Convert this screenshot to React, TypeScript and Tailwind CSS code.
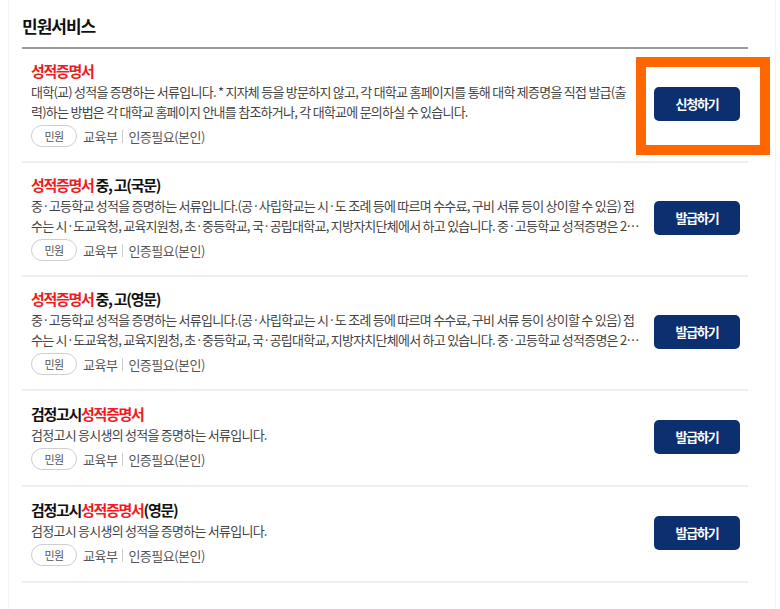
import React from "react";

type Service = {
  pre?: string;
  red: string;
  post?: string;
  desc: string;
  action: string;
};

const services: Service[] = [
  {
    red: "성적증명서",
    desc: "대학(교) 성적을 증명하는 서류입니다. * 지자체 등을 방문하지 않고, 각 대학교 홈페이지를 통해 대학 제증명을 직접 발급(출력)하는 방법은 각 대학교 홈페이지 안내를 참조하거나, 각 대학교에 문의하실 수 있습니다.",
    action: "신청하기",
  },
  {
    red: "성적증명서",
    post: " 중, 고(국문)",
    desc: "중·고등학교 성적을 증명하는 서류입니다.(공·사립학교는 시·도 조례 등에 따르며 수수료, 구비 서류 등이 상이할 수 있음) 접수는 시·도교육청, 교육지원청, 초·중등학교, 국·공립대학교, 지방자치단체에서 하고 있습니다. 중·고등학교 성적증명은 2000년 이후 졸업자에 한하여 발급 가능합니다.",
    action: "발급하기",
  },
  {
    red: "성적증명서",
    post: " 중, 고(영문)",
    desc: "중·고등학교 성적을 증명하는 서류입니다.(공·사립학교는 시·도 조례 등에 따르며 수수료, 구비 서류 등이 상이할 수 있음) 접수는 시·도교육청, 교육지원청, 초·중등학교, 국·공립대학교, 지방자치단체에서 하고 있습니다. 중·고등학교 성적증명은 2000년 이후 졸업자에 한하여 발급 가능합니다.",
    action: "발급하기",
  },
  {
    pre: "검정고시",
    red: "성적증명서",
    desc: "검정고시 응시생의 성적을 증명하는 서류입니다.",
    action: "발급하기",
  },
  {
    pre: "검정고시",
    red: "성적증명서",
    post: "(영문)",
    desc: "검정고시 응시생의 성적을 증명하는 서류입니다.",
    action: "발급하기",
  },
];

const font = { fontFamily: '"Noto Sans CJK KR", "Noto Sans", sans-serif' };

const App: React.FC = () => {
  return (
    <div className="relative w-[780px] h-[609px] bg-white overflow-hidden" style={font}>
      <div className="ml-[8px] mr-[4px] h-full border-x border-[#f4f4f4] pl-[13px] pr-[27px]">
        {/* Header */}
        <h1 className="pt-[13px] pb-[8px] text-[17px] leading-[26px] font-bold text-[#111] tracking-[-1px]">
          민원서비스
        </h1>
        <div className="h-[2px] bg-[#9a9a9a]" />

        {/* Service list */}
        <ul>
          {services.map((s, i) => (
            <li
              key={i}
              className="flex items-center min-h-[96px] pl-[9px] pr-[8px] pt-[11px] pb-[14px] border-b-2 border-[#efefef]"
            >
              <div className="w-[609px]">
                <p className="text-[15px] leading-[22px] font-bold text-[#111] tracking-[-1.3px]">
                  {s.pre}
                  <span className="text-[#ee1c25]">{s.red}</span>
                  {s.post}
                </p>
                <p className="text-[13px] leading-[20px] text-[#444] tracking-[-0.75px] break-all line-clamp-2">
                  {s.desc}
                </p>
                <div className="mt-[3px] flex items-center text-[13px] leading-none text-[#555] tracking-[-0.5px]">
                  <span className="flex h-[22px] w-[46px] items-center justify-center rounded-full border border-[#cfcfcf] text-[11px] text-[#555]">
                    민원
                  </span>
                  <span className="ml-[6px]">교육부</span>
                  <span className="mx-[5px] h-[13px] w-px bg-[#cccccc]" />
                  <span>인증필요(본인)</span>
                </div>
              </div>
              <button className="ml-auto h-[34px] w-[86px] rounded-[5px] bg-[#0b2f6f] text-[13px] font-bold text-white tracking-[-1.2px]">
                {s.action}
              </button>
            </li>
          ))}
        </ul>
      </div>

      {/* highlight annotation */}
      <div className="absolute left-[636px] top-[57px] w-[134px] h-[98px] border-[10px] border-[#ff6600]" />
    </div>
  );
};

export default App;
